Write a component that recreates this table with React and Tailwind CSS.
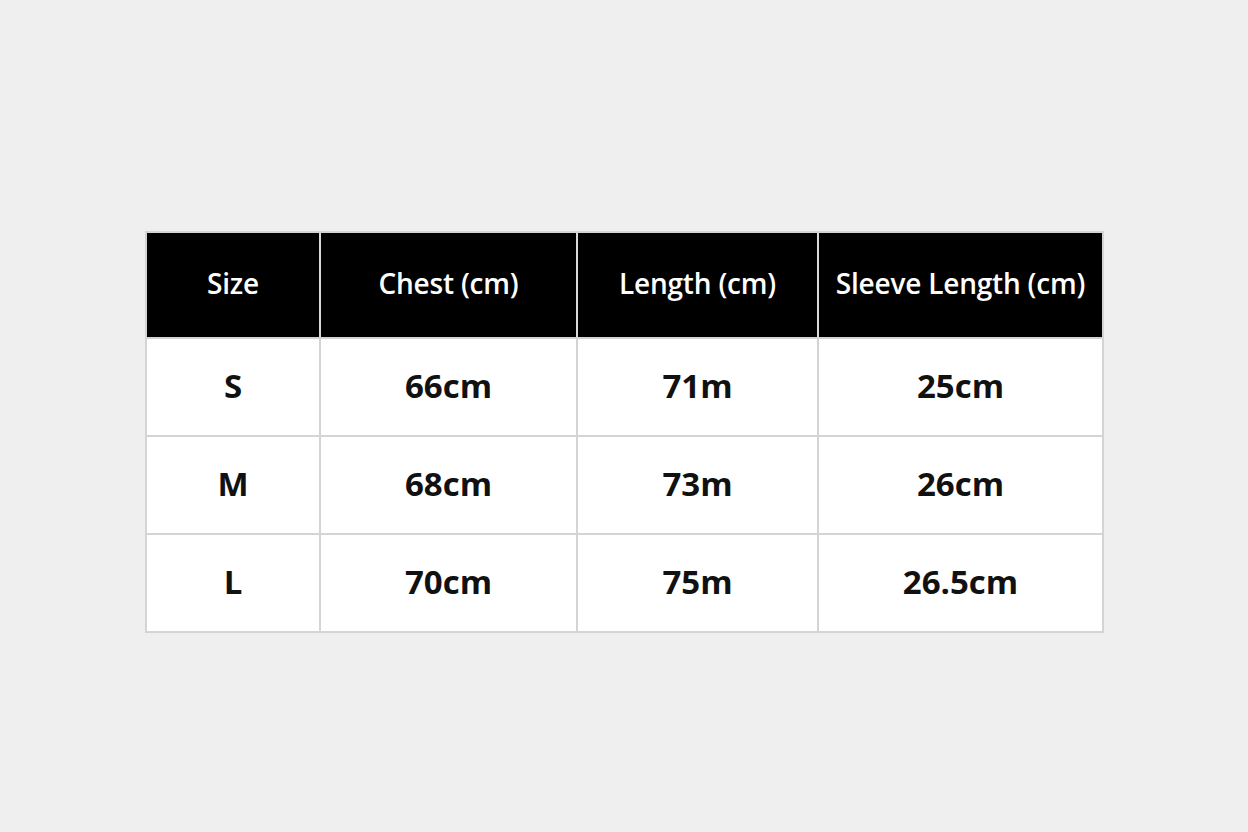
const headers = ['Size', 'Chest (cm)', 'Length (cm)', 'Sleeve Length (cm)'];
const rows = [
  ['S', '66cm', '71m', '25cm'],
  ['M', '68cm', '73m', '26cm'],
  ['L', '70cm', '75m', '26.5cm'],
];

export default function App() {
  return (
    <div className="w-[1248px] h-[832px] bg-[#efefef] flex pl-[145px] pt-[231px] font-['Open_Sans',sans-serif]">
      <div className="h-fit border-2 border-[#d4d4d4] bg-white">
        <div className="grid grid-cols-[172px_257px_241px_285px]">
          {headers.map((h, i) => (
            <div
              key={h}
              className={`h-[104px] pb-1 bg-black text-white font-semibold text-[28px] tracking-[-0.2px] flex items-center justify-center whitespace-nowrap ${i > 0 ? 'border-l-2 border-[#d9d9d9]' : ''}`}
            >
              {h}
            </div>
          ))}
          {rows.map((r) =>
            r.map((c, i) => (
              <div
                key={r[0] + i}
                className={`h-[98px] pb-0.5 border-t-2 border-[#d4d4d4] text-[#111] font-bold text-[33px] flex items-center justify-center ${i > 0 ? 'border-l-2' : ''}`}
              >
                {c}
              </div>
            ))
          )}
        </div>
      </div>
    </div>
  );
}
